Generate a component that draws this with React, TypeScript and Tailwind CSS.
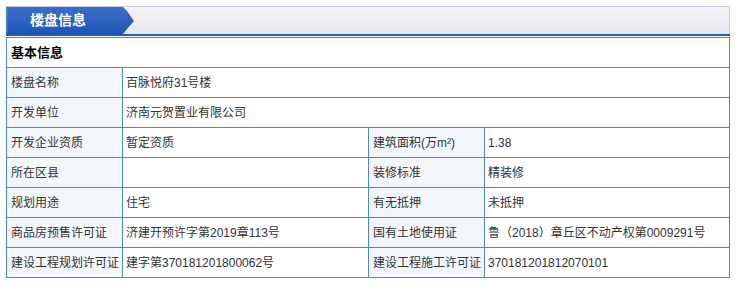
import React from "react";

type Cell = { label: string; value: string };

const rows: Cell[][] = [
  [{ label: "楼盘名称", value: "百脉悦府31号楼" }],
  [{ label: "开发单位", value: "济南元贺置业有限公司" }],
  [
    { label: "开发企业资质", value: "暂定资质" },
    { label: "建筑面积(万m²)", value: "1.38" },
  ],
  [
    { label: "所在区县", value: "" },
    { label: "装修标准", value: "精装修" },
  ],
  [
    { label: "规划用途", value: "住宅" },
    { label: "有无抵押", value: "未抵押" },
  ],
  [
    { label: "商品房预售许可证", value: "济建开预许字第2019章113号" },
    { label: "国有土地使用证", value: "鲁（2018）章丘区不动产权第0009291号" },
  ],
  [
    { label: "建设工程规划许可证", value: "建字第370181201800062号" },
    { label: "建设工程施工许可证", value: "370181201812070101" },
  ],
];

const Label = ({ text, first }: { text: string; first?: boolean }) => (
  <div
    className={`flex items-center bg-[#f3f7fc] pl-[4px] whitespace-nowrap ${
      first ? "w-[115px]" : "w-[116px] border-l border-[#4a88d4]"
    }`}
  >
    {text}
  </div>
);

export default function App() {
  return (
    <div
      className="bg-white w-[736px] h-[282px] pl-[6px] pt-[6px] text-[12px] text-[#333]"
      style={{ fontFamily: '"Liberation Sans", "Noto Sans CJK SC", sans-serif' }}
    >
      {/* title bar */}
      <div className="w-[724px] h-[28px] flex border-t border-r border-[#c6c9e8] bg-gradient-to-b from-[#f6f6f8] to-[#e6e6ef]">
        <div className="relative w-[128px] h-[27px]">
          <svg className="absolute left-0 top-0" width="130" height="27" viewBox="0 0 130 27">
            <defs>
              <linearGradient id="tab" x1="0" y1="0" x2="0" y2="1">
                <stop offset="0" stopColor="#3a6fc8" />
                <stop offset="1" stopColor="#1f55b4" />
              </linearGradient>
            </defs>
            <polygon points="0,0 117,0 121,4 128,14 121,22 117,27 0,27" fill="url(#tab)" />
            <rect x="0.5" y="0.5" width="1" height="26" fill="#5f8ad6" />
          </svg>
          <span className="absolute left-[24px] top-[5px] text-[14px] leading-[17px] font-bold text-white">
            楼盘信息
          </span>
        </div>
      </div>
      <div className="w-[724px] h-[2px] bg-[#1f5ec4]" />
      <div className="h-px" />

      {/* table */}
      <div className="w-[724px] border border-[#4a88d4]">
        <div className="h-[29px] flex items-center pl-[4px] text-[13px] font-bold text-black">
          基本信息
        </div>
        {rows.map((row, i) => (
          <div key={i} className="h-[30px] flex border-t border-[#4a88d4]">
            {row.map((c, j) => (
              <React.Fragment key={j}>
                <Label text={c.label} first={j === 0} />
                <div
                  className={`flex items-center border-l border-[#4a88d4] pl-[3px] whitespace-nowrap ${
                    row.length === 1 ? "flex-1" : j === 0 ? "w-[246px]" : "flex-1"
                  } ${c.value === "1.38" ? "text-[#3b1f5c]" : ""}`}
                >
                  {c.value}
                </div>
              </React.Fragment>
            ))}
          </div>
        ))}
      </div>
    </div>
  );
}
